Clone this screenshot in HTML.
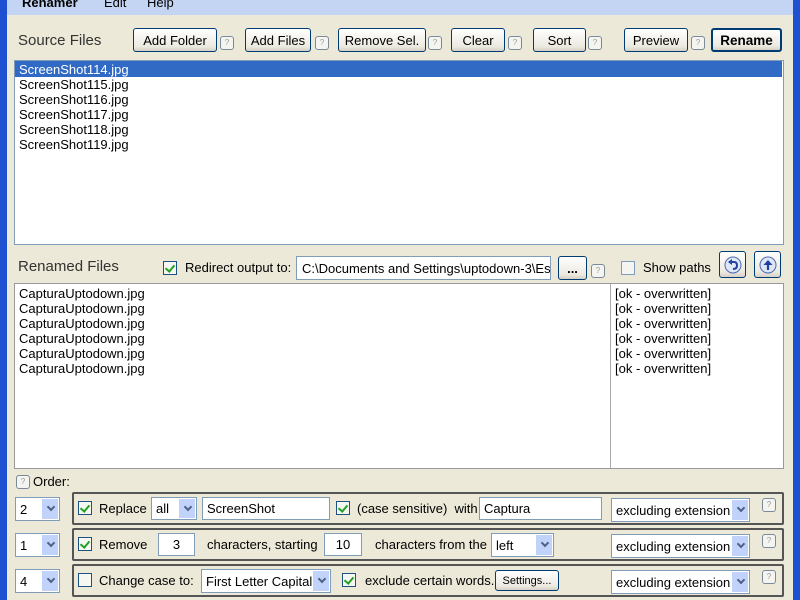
<!DOCTYPE html>
<html><head><meta charset="utf-8"><style>
*{box-sizing:border-box;margin:0;padding:0}
body{width:800px;height:600px;overflow:hidden;background:#ece9d8;font-family:"Liberation Sans",sans-serif;font-size:12px;color:#000;position:relative}
.a{position:absolute}
.btn{position:absolute;border:1px solid #003c74;border-radius:3px;background:linear-gradient(#fff,#ece9e0 80%,#d6d0c5);text-align:center;font-size:13px;display:flex;align-items:center;justify-content:center}
.q{position:absolute;width:14px;height:14px;border:1px solid #7a8a99;border-radius:3px;background:#f4f4f0;font-size:8px;color:#999;text-align:center;line-height:12px}
.box{position:absolute;background:#fff;border:1px solid #7f9db9}
.cb{position:absolute;width:14px;height:14px;border:1px solid #1c5180;background:#f6f6f2}
.cb.on::after{content:"";position:absolute;left:3px;top:1px;width:4px;height:7px;border:solid #21a121;border-width:0 2px 2px 0;transform:rotate(40deg)}
.sel{position:absolute;background:#fff;border:1px solid #7f9db9;font-size:13px;padding-left:4px;display:flex;align-items:center}
.sel::after{content:"";position:absolute;right:1px;top:1px;bottom:1px;width:16px;background:#c1d3fb}
.sel i{position:absolute;right:5px;top:50%;margin-top:-5px;width:6px;height:6px;border:solid #4d6185;border-width:0 2px 2px 0;transform:rotate(45deg);z-index:1}
.grp{position:absolute;left:72px;width:712px;height:33px;border:2px solid #555;border-radius:2px}
.t{position:absolute;font-size:13px}
.ln div{height:15px;line-height:15px;font-size:13px}
</style></head><body>
<div class="a" style="left:0;top:0;width:800px;height:15px;background:#c4d5f3"></div>
<div class="a" style="left:0;top:0;width:7px;height:600px;background:#1e50d2"></div>
<div class="a" style="left:793px;top:0;width:7px;height:600px;background:#1e50d2"></div>
<div class="t" style="left:22px;top:-5px;font-weight:bold">Renamer</div>
<div class="t" style="left:104px;top:-5px">Edit</div>
<div class="t" style="left:147px;top:-5px">Help</div>

<div class="t" style="left:18px;top:32px;font-size:15px;color:#333">Source Files</div>
<div class="btn" style="left:133px;top:28px;width:84px;height:24px">Add Folder</div><div class="q" style="left:220px;top:36px">?</div>
<div class="btn" style="left:245px;top:28px;width:66px;height:24px">Add Files</div><div class="q" style="left:315px;top:36px">?</div>
<div class="btn" style="left:338px;top:28px;width:88px;height:24px">Remove Sel.</div><div class="q" style="left:428px;top:36px">?</div>
<div class="btn" style="left:451px;top:28px;width:54px;height:24px">Clear</div><div class="q" style="left:508px;top:36px">?</div>
<div class="btn" style="left:533px;top:28px;width:53px;height:24px">Sort</div><div class="q" style="left:588px;top:36px">?</div>
<div class="btn" style="left:624px;top:28px;width:64px;height:24px">Preview</div><div class="q" style="left:691px;top:36px">?</div>
<div class="btn" style="left:711px;top:28px;width:71px;height:24px;font-weight:bold;font-size:13.5px;border-width:2px">Rename</div>

<div class="box" style="left:14px;top:60px;width:770px;height:185px"></div>
<div class="a" style="left:15px;top:61px;width:767px;height:16px;background:#316ac5"></div>
<div class="a ln" style="left:19px;top:62px"><div style="color:#fff">ScreenShot114.jpg</div><div>ScreenShot115.jpg</div><div>ScreenShot116.jpg</div><div>ScreenShot117.jpg</div><div>ScreenShot118.jpg</div><div>ScreenShot119.jpg</div></div>

<div class="t" style="left:18px;top:258px;font-size:15px;color:#333">Renamed Files</div>
<div class="cb on" style="left:163px;top:261px"></div>
<div class="t" style="left:185px;top:260px">Redirect output to:</div>
<div class="box" style="left:296px;top:256px;width:255px;height:24px;padding:4px 5px;font-size:13px;white-space:nowrap;overflow:hidden">C:\Documents and Settings\uptodown-3\Es</div>
<div class="btn" style="left:558px;top:256px;width:29px;height:24px;font-weight:bold">...</div><div class="q" style="left:591px;top:264px">?</div>
<div class="cb" style="left:621px;top:261px;border-color:#7f9db9;background:#f4f4f0"></div>
<div class="t" style="left:643px;top:260px">Show paths</div>
<div class="btn" style="left:719px;top:251px;width:27px;height:27px"><svg width="18" height="18" viewBox="0 0 18 18"><circle cx="9" cy="9" r="8" fill="#dfe6f5" stroke="#4a6ab0"/><path d="M6 6 L10 6 Q13 6 13 9.5 Q13 13 9 13" fill="none" stroke="#2040a0" stroke-width="2"/><path d="M4 6 L8 3 L8 9 Z" fill="#2040a0"/></svg></div>
<div class="btn" style="left:754px;top:251px;width:27px;height:27px"><svg width="18" height="18" viewBox="0 0 18 18"><circle cx="9" cy="9" r="8" fill="#dfe6f5" stroke="#4a6ab0"/><path d="M9 14 L9 7" stroke="#2040a0" stroke-width="2.2"/><path d="M4.5 9 L9 4 L13.5 9 Z" fill="#2040a0"/></svg></div>

<div class="box" style="left:14px;top:283px;width:770px;height:186px;border-color:#999"></div>
<div class="a" style="left:610px;top:284px;width:1px;height:184px;background:#aaa"></div>
<div class="a ln" style="left:19px;top:286px"><div>CapturaUptodown.jpg</div><div>CapturaUptodown.jpg</div><div>CapturaUptodown.jpg</div><div>CapturaUptodown.jpg</div><div>CapturaUptodown.jpg</div><div>CapturaUptodown.jpg</div></div>
<div class="a ln" style="left:615px;top:286px"><div>[ok - overwritten]</div><div>[ok - overwritten]</div><div>[ok - overwritten]</div><div>[ok - overwritten]</div><div>[ok - overwritten]</div><div>[ok - overwritten]</div></div>

<div class="q" style="left:16px;top:475px">?</div>
<div class="t" style="left:33px;top:474px">Order:</div>

<div class="sel" style="left:15px;top:497px;width:45px;height:24px">2<i></i></div>
<div class="sel" style="left:15px;top:533px;width:45px;height:24px">1<i></i></div>
<div class="sel" style="left:15px;top:569px;width:45px;height:24px">4<i></i></div>

<div class="grp" style="top:492px"></div>
<div class="grp" style="top:528px"></div>
<div class="grp" style="top:564px"></div>

<div class="cb on" style="left:78px;top:501px"></div>
<div class="t" style="left:99px;top:501px">Replace</div>
<div class="sel" style="left:151px;top:497px;width:46px;height:23px">all<i></i></div>
<div class="box" style="left:202px;top:497px;width:128px;height:23px;padding:3px 4px;font-size:13px">ScreenShot</div>
<div class="cb on" style="left:336px;top:501px"></div>
<div class="t" style="left:357px;top:501px">(case sensitive)&nbsp; with</div>
<div class="box" style="left:479px;top:497px;width:123px;height:23px;padding:3px 4px;font-size:13px">Captura</div>
<div class="sel" style="left:611px;top:498px;width:139px;height:24px">excluding extension<i></i></div>
<div class="q" style="left:762px;top:498px">?</div>

<div class="cb on" style="left:78px;top:537px"></div>
<div class="t" style="left:99px;top:537px">Remove</div>
<div class="box" style="left:158px;top:533px;width:37px;height:23px;padding:3px;text-align:center;font-size:13px">3</div>
<div class="t" style="left:207px;top:537px">characters, starting</div>
<div class="box" style="left:324px;top:533px;width:38px;height:23px;padding:3px;text-align:center;font-size:13px">10</div>
<div class="t" style="left:375px;top:537px">characters from the</div>
<div class="sel" style="left:491px;top:533px;width:63px;height:24px">left<i></i></div>
<div class="sel" style="left:611px;top:534px;width:139px;height:24px">excluding extension<i></i></div>
<div class="q" style="left:762px;top:534px">?</div>

<div class="cb" style="left:78px;top:573px"></div>
<div class="t" style="left:99px;top:573px">Change case to:</div>
<div class="sel" style="left:201px;top:569px;width:130px;height:24px">First Letter Capital<i></i></div>
<div class="cb on" style="left:342px;top:573px"></div>
<div class="t" style="left:365px;top:573px">exclude certain words.</div>
<div class="btn" style="left:495px;top:570px;width:64px;height:21px;font-size:11px">Settings...</div>
<div class="sel" style="left:611px;top:570px;width:139px;height:24px">excluding extension<i></i></div>
<div class="q" style="left:762px;top:570px">?</div>
</body></html>
